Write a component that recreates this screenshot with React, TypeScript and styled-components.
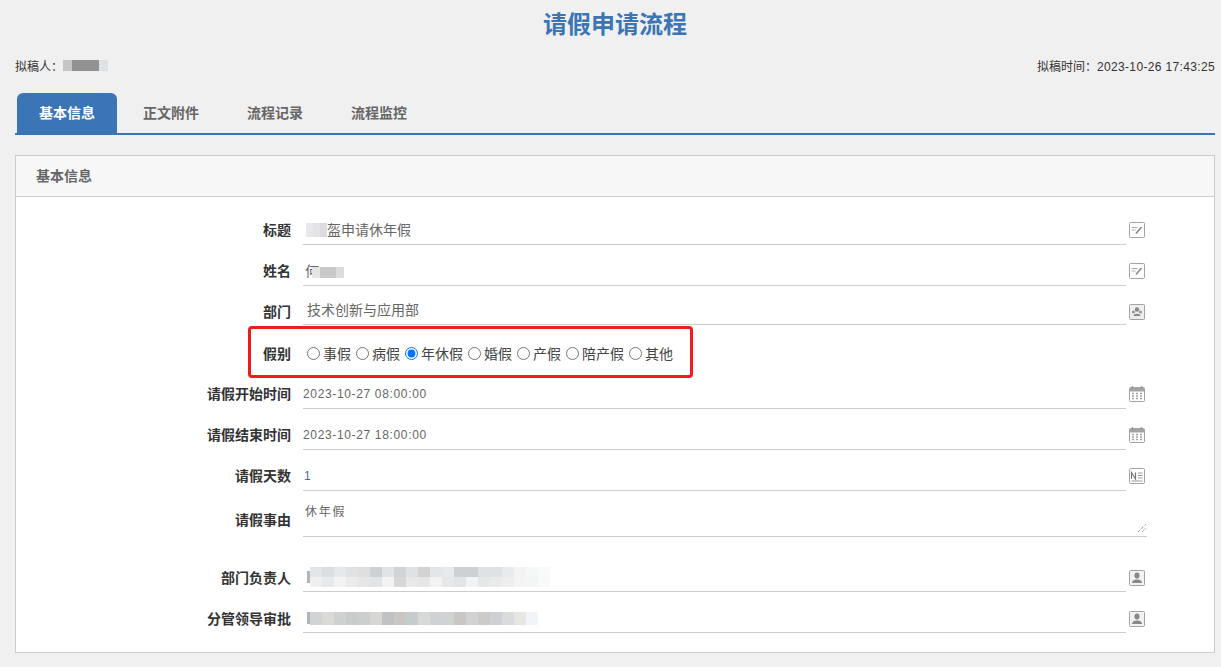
import React from 'react';
import styled, { createGlobalStyle } from 'styled-components';

const Global = createGlobalStyle`
  html, body { margin: 0; padding: 0; background: #f0f0f0; }
  body { font-family: "Liberation Sans", "Noto Sans CJK SC", sans-serif; font-size: 14px; color: #333; }
`;
const Page = styled.div`
  width: 1221px; height: 667px; overflow: hidden; padding: 0 6px 0 15px; box-sizing: border-box;
  background: #f0f0f0;
`;
const Title = styled.h1`
  margin: 0; height: 50px; line-height: 50px; text-align: center; font-size: 24px; font-weight: 700; color: #3b75b5;
`;
const Meta = styled.div`
  display: flex; justify-content: space-between; align-items: center; height: 31px; font-size: 12px; color: #333;
`;
const MetaLeft = styled.div`display: flex; align-items: center;`;
const MetaDate = styled.span`letter-spacing: 0.35px;`;
const Tabs = styled.div`
  display: flex; margin-top: 12px; height: 40px; border-bottom: 2px solid #3b75b5; padding-left: 2px;
`;
const Tab = styled.div<{ $active?: boolean }>`
  width: ${p => (p.$active ? 100 : 104)}px; margin-right: ${p => (p.$active ? 2 : 0)}px;
  height: 40px; line-height: 40px; text-align: center; font-size: 14px; font-weight: 700;
  color: ${p => (p.$active ? '#fff' : '#666')};
  background: ${p => (p.$active ? '#3b75b5' : 'transparent')};
  border-radius: 6px 6px 0 0;
`;
const Panel = styled.section`
  position: relative; margin-top: 20px; height: 498px; box-sizing: border-box; border: 1px solid #ccc; background: #fff;
`;
const PanelHead = styled.div`
  height: 41px; line-height: 40px; padding-left: 20px; box-sizing: border-box; background: #f7f7f7; border-bottom: 1px solid #ccc;
  font-size: 14px; font-weight: 700; color: #666;
`;
const Form = styled.div`padding-top: 7px;`;
const Row = styled.div<{ $h?: number; $mt?: number }>`
  display: flex; height: ${p => p.$h ?? 41}px; margin-top: ${p => p.$mt ?? 0}px;
`;
const Label = styled.div<{ $top?: number }>`
  width: 275px; flex: none; text-align: right; font-size: 14px; font-weight: 700; color: #333; line-height: 20px;
  padding-top: ${p => p.$top ?? 16}px; box-sizing: border-box; white-space: nowrap;
`;
const Field = styled.div<{ $indent?: number }>`
  margin-left: 12px; width: 823px; flex: none; box-sizing: border-box; border-bottom: 1px solid #ccc;
  display: flex; align-items: flex-end; padding: 0 0 4px ${p => p.$indent ?? 0}px; color: #666; font-size: 14px; line-height: 20px; white-space: nowrap;
`;
const Num = styled.span<{ $blue?: boolean }>`
  font-size: 12px; letter-spacing: 0.65px; color: ${p => (p.$blue ? '#37758f' : '#666')};
`;
const IconSlot = styled.div<{ $bottom?: number }>`
  margin-left: 3px; width: 16px; height: 100%; display: flex; align-items: flex-end; padding-bottom: ${p => p.$bottom ?? 7}px; box-sizing: border-box;
`;
const RadioRow = styled.div`
  margin-left: 16px; display: flex; align-items: center; padding-top: 13px; height: 43px; box-sizing: border-box;
`;
const RadioItem = styled.label`
  display: inline-flex; align-items: center; margin-right: 5px; font-size: 14px; color: #444;
`;
const RadioInput = styled.input`
  margin: 0 3px 0 0; width: 13px; height: 13px; accent-color: #0075ff;
`;
const Area = styled.div`
  margin-left: 12px; width: 844px; flex: none; height: 46px; box-sizing: border-box; border-bottom: 1px solid #ccc;
  padding: 11px 0 0 2px; position: relative; color: #666; font-size: 12px; letter-spacing: 1.8px; line-height: 20px;
`;
const Grip = styled.svg`position: absolute; right: 0; bottom: 3px;`;
const Mosaic = styled.span<{ $left?: number; $lift?: number }>`
  display: inline-flex; flex-direction: column; flex: none; margin-left: ${p => p.$left ?? 0}px; margin-bottom: ${p => p.$lift ?? 0}px;
`;
const MosaicLine = styled.span`display: flex;`;
const Cell = styled.span`display: block; flex: none;`;
const Fragment = styled.span<{ $lift?: number }>`
  display: block; flex: none; width: 3px; height: 12px; background: #b4b4b4; margin-bottom: ${p => p.$lift ?? 0}px;
`;
const Highlight = styled.div`
  position: absolute; left: 232px; top: 170px; width: 445px; height: 52px; box-sizing: border-box;
  border: 3px solid #f01c1c; border-radius: 4px; pointer-events: none;
`;

const Blur = ({ lines, size = 12, h = 7, left, lift }: { lines: string[][]; size?: number; h?: number; left?: number; lift?: number }) => (
  <Mosaic $left={left} $lift={lift}>
    {lines.map((l, i) => (
      <MosaicLine key={i}>
        {l.map((c, j) => <Cell key={j} style={{ width: size, height: h, background: c }} />)}
      </MosaicLine>
    ))}
  </Mosaic>
);

const BoxIcon = ({ children }: { children: React.ReactNode }) => (
  <svg width="16" height="16" viewBox="0 0 16 16" fill="none">
    <rect x="0.5" y="0.5" width="15" height="15" rx="1" stroke="#a3a3a3" fill="#fff" />
    {children}
  </svg>
);
const EditIcon = () => (
  <BoxIcon>
    <path d="M2.5 5.5h6M2.5 8h4" stroke="#aaa" />
    <path d="M7 11.5l5.5-6.5" stroke="#888" strokeWidth="1.6" />
  </BoxIcon>
);
const OrgIcon = () => (
  <svg width="16" height="16" viewBox="0 0 16 16">
    <rect x="0.5" y="0.5" width="15" height="15" rx="1" stroke="#a3a3a3" fill="#eee" />
    <circle cx="8" cy="5.5" r="2.2" fill="#888" />
    <circle cx="4.5" cy="8" r="1.6" fill="#999" />
    <circle cx="11.5" cy="8" r="1.6" fill="#999" />
    <path d="M4.5 12c0-3 7-3 7 0z" fill="#888" />
  </svg>
);
const CalIcon = () => (
  <svg width="16" height="16" viewBox="0 0 16 16">
    <rect x="0.5" y="1.5" width="15" height="14" rx="1" stroke="#a3a3a3" fill="#fff" />
    <rect x="1" y="2" width="14" height="3.5" fill="#a3a3a3" />
    <path d="M3.5 0v3M12.5 0v3" stroke="#999" strokeWidth="1.4" />
    <path d="M3 7.5h2M7 7.5h2M11 7.5h2M3 10h2M7 10h2M11 10h2M3 12.5h2M7 12.5h2M11 12.5h2" stroke="#a3a3a3" strokeWidth="1.4" />
  </svg>
);
const NumIcon = () => (
  <svg width="16" height="16" viewBox="0 0 16 16" fill="none">
    <rect x="0.5" y="0.5" width="15" height="15" rx="1" stroke="#a3a3a3" fill="#fff" />
    <path d="M2.5 11V4.5l4 6.5V4.5" stroke="#777" strokeWidth="1.2" />
    <path d="M9 5h4.5M9 7.5h4.5M9 10h4.5M2.5 13h11" stroke="#999" />
  </svg>
);
const UserIcon = () => (
  <svg width="16" height="16" viewBox="0 0 16 16">
    <rect x="0.5" y="0.5" width="15" height="15" rx="1" stroke="#a3a3a3" fill="#f2f2f2" />
    <ellipse cx="8" cy="5.6" rx="2.6" ry="3" fill="#888" />
    <path d="M3 13c0-3 3-3.6 5-3.6s5 .6 5 3.6z" fill="#888" />
  </svg>
);

const mgr = [
  ['#e4e5e7', '#dcdddf', '#e6e7e8', '#e0e1e1', '#dddedd', '#ced0d3', '#e2e3e4', '#d2d3d4', '#dfe1e4', '#d4d2d1', '#e3e5e8', '#e8e9ea', '#cfd0d2', '#cfd0d2', '#dfe1e2', '#dfe1e2', '#e9eaeb', '#f3f3f3', '#f6f7f7', '#fafafa'],
  ['#f0f0f1', '#e8e9ea', '#f3f3f3', '#ebebeb', '#e6e6e7', '#e3e4e5', '#f4f3f2', '#d8d8d9', '#e9e9ea', '#e6e6e6', '#f2f2f2', '#e8e8e9', '#e3e4e6', '#f2f3f4', '#e6e7e7', '#eaeaea', '#eeeeef', '#f4f4f4', '#f4f6f5', '#f8f9f9'],
];
const lead = [
  ['#d2d3d4', '#dadad8', '#cfd1d1', '#c9cbcc', '#cdcfce', '#d8d7d3', '#c0c2c4', '#cbc6c3', '#c6cbcc', '#d7d8d8', '#cfd1d3', '#d1d3d2', '#c9c6c6', '#d0d2d4', '#cdcac8', '#ced1d4', '#dadbdb', '#e7e6e2', '#f2f4f8'],
];
const Radios: [string, boolean?][] = [['事假'], ['病假'], ['年休假', true], ['婚假'], ['产假'], ['陪产假'], ['其他']];

export default function App() {
  return (
    <Page>
      <Global />
      <Title>请假申请流程</Title>
      <Meta>
        <MetaLeft>拟稿人：<Blur lines={[['#c6c6c6', '#929292', '#929292', '#929292', '#dfe2e5']]} size={9} h={11} /></MetaLeft>
        <span>拟稿时间：<MetaDate>2023-10-26 17:43:25</MetaDate></span>
      </Meta>
      <Tabs>
        <Tab $active>基本信息</Tab>
        <Tab>正文附件</Tab>
        <Tab>流程记录</Tab>
        <Tab>流程监控</Tab>
      </Tabs>
      <Panel>
        <PanelHead>基本信息</PanelHead>
        <Form>
          <Row>
            <Label>标题</Label>
            <Field $indent={3}><Blur lines={[['#e8e8ea', '#e4e4e6', '#dcdce0']]} size={7} h={14} lift={3} />盔申请休年假</Field>
            <IconSlot><EditIcon /></IconSlot>
          </Row>
          <Row>
            <Label>姓名</Label>
            <Field $indent={2}>何<Blur lines={[['#e4e4e5', '#c9c9ca', '#c9c9ca', '#dcdcdd']]} size={8} h={11} lift={3} left={-7} /></Field>
            <IconSlot><EditIcon /></IconSlot>
          </Row>
          <Row $h={39}>
            <Label>部门</Label>
            <Field $indent={4}>技术创新与应用部</Field>
            <IconSlot $bottom={5}><OrgIcon /></IconSlot>
          </Row>
          <Row $h={43}>
            <Label $top={19}>假别</Label>
            <RadioRow>
              {Radios.map(([t, c]) => (
                <RadioItem key={t}><RadioInput type="radio" name="leave" defaultChecked={c} />{t}</RadioItem>
              ))}
            </RadioRow>
          </Row>
          <Row>
            <Label>请假开始时间</Label>
            <Field><Num>2023-10-27 08:00:00</Num></Field>
            <IconSlot><CalIcon /></IconSlot>
          </Row>
          <Row>
            <Label>请假结束时间</Label>
            <Field><Num>2023-10-27 18:00:00</Num></Field>
            <IconSlot><CalIcon /></IconSlot>
          </Row>
          <Row>
            <Label>请假天数</Label>
            <Field $indent={1}><Num $blue>1</Num></Field>
            <IconSlot><NumIcon /></IconSlot>
          </Row>
          <Row $h={46}>
            <Label $top={19}>请假事由</Label>
            <Area>
              休年假
              <Grip width="10" height="10" viewBox="0 0 10 10"><path d="M1 9L9 1M5 9l4-4" stroke="#777" strokeDasharray="1 1" /></Grip>
            </Area>
          </Row>
          <Row $mt={14}>
            <Label $top={17}>部门负责人</Label>
            <Field $indent={4}><Fragment $lift={4} /><Blur lines={mgr} size={12} h={10} /></Field>
            <IconSlot $bottom={6}><UserIcon /></IconSlot>
          </Row>
          <Row>
            <Label $top={17}>分管领导审批</Label>
            <Field $indent={4}><Fragment $lift={4} /><Blur lines={lead} size={12} h={13} lift={3} /></Field>
            <IconSlot $bottom={6}><UserIcon /></IconSlot>
          </Row>
        </Form>
        <Highlight />
      </Panel>
    </Page>
  );
}
